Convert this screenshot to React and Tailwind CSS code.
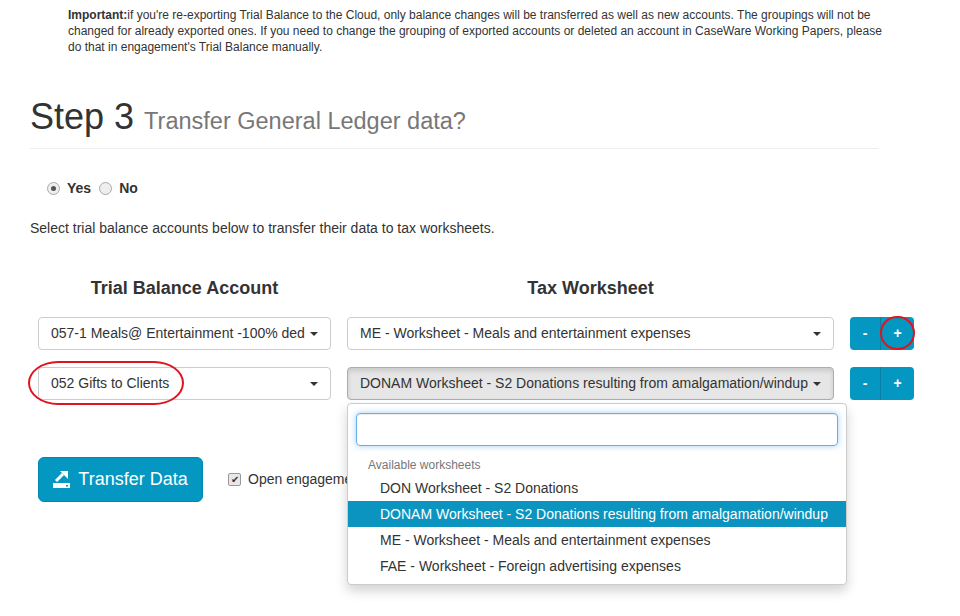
import { useState } from 'react';

const worksheets = [
  'DON Worksheet - S2 Donations',
  'DONAM Worksheet - S2 Donations resulting from amalgamation/windup',
  'ME - Worksheet - Meals and entertainment expenses',
  'FAE - Worksheet - Foreign advertising expenses',
];

function Caret() {
  return <span className="ml-auto h-0 w-0 shrink-0 border-x-[4px] border-t-[4px] border-x-transparent border-t-[#333]" />;
}

function SelectBox({ label, active }) {
  return (
    <div
      className={
        'flex h-[33px] w-full items-center overflow-hidden rounded-[4px] border pl-[12px] pr-[12px] text-[14px] text-[#333] ' +
        (active ? 'border-[#adadad] bg-[#e6e6e6] shadow-[inset_0_3px_5px_rgba(0,0,0,0.125)]' : 'border-[#ccc] bg-white')
      }
    >
      <span className="min-w-0 overflow-hidden whitespace-nowrap pr-[4px]">{label}</span>
      <Caret />
    </div>
  );
}

function PlusMinus() {
  return (
    <div className="flex h-[33px] overflow-hidden rounded-[4px] text-[14px] font-bold text-white">
      <div className="flex w-[31px] items-center justify-center border-r border-[#0880a6] bg-[#0497c1]">-</div>
      <div className="flex w-[33px] items-center justify-center bg-[#0497c1]">+</div>
    </div>
  );
}

function ExportIcon() {
  return (
    <svg width="18" height="17" viewBox="0 0 18 17" className="mr-[7px]">
      <rect x="0" y="12" width="17" height="5" fill="white" />
      <rect x="13" y="14" width="2" height="1.5" fill="#0497c1" />
      <path d="M3 10 L10 3" stroke="white" strokeWidth="3" />
      <polygon points="7,0 15,0 15,8" fill="white" />
    </svg>
  );
}

export default function App() {
  const [answer, setAnswer] = useState('yes');

  return (
    <div
      className="relative h-[616px] w-[960px] overflow-hidden bg-white text-[#333]"
      style={{ fontFamily: '"Liberation Sans", Arial, sans-serif' }}
    >
      {/* notice */}
      <p className="w-[888px] pl-[68px] pt-[7px] text-[12px] leading-[16px] text-[#333]">
        <b>Important:</b>if you're re-exporting Trial Balance to the Cloud, only balance changes will be transferred as well as new accounts. The groupings will not be changed for already exported ones. If you need to change the grouping of exported accounts or deleted an account in CaseWare Working Papers, please do that in engagement's Trial Balance manually.
      </p>

      <div className="px-[30px]">
        <h1 className="mt-[42px] text-[36px] leading-[40px] text-[#333]">
          Step 3 <small className="text-[23.5px] text-[#777]">Transfer General Ledger data?</small>
        </h1>
        <hr className="mt-[7px] w-[848px] border-t border-[#eee]" />

        {/* yes / no */}
        <div className="mt-[29px] flex items-center pl-[17px] text-[14px] font-bold">
          <label className="flex cursor-pointer items-center" onClick={() => setAnswer('yes')}>
            <span className="flex h-[13px] w-[13px] items-center justify-center rounded-full border border-[#aaa] bg-[#eee]">
              {answer === 'yes' && <span className="h-[5px] w-[5px] rounded-full bg-[#555]" />}
            </span>
            <span className="ml-[7px]">Yes</span>
          </label>
          <label className="ml-[8px] flex cursor-pointer items-center" onClick={() => setAnswer('no')}>
            <span className="flex h-[13px] w-[13px] items-center justify-center rounded-full border border-[#aaa] bg-[#eee]">
              {answer === 'no' && <span className="h-[5px] w-[5px] rounded-full bg-[#555]" />}
            </span>
            <span className="ml-[7px]">No</span>
          </label>
        </div>

        <p className="mt-[19px] text-[14px] leading-[20px]">
          Select trial balance accounts below to transfer their data to tax worksheets.
        </p>

        {/* mapping table */}
        <div className="mt-[37px] pl-[8px]">
          <div className="flex text-[18px] font-bold">
            <div className="w-[293px] text-center">Trial Balance Account</div>
            <div className="ml-[16px] w-[487px] text-center">Tax Worksheet</div>
          </div>

          <div className="mt-[15px] flex items-center">
            <div className="w-[293px]">
              <SelectBox label="057-1 Meals@ Entertainment -100% ded" />
            </div>
            <div className="ml-[16px] w-[487px]">
              <SelectBox label="ME - Worksheet - Meals and entertainment expenses" />
            </div>
            <div className="relative ml-[16px]">
              <PlusMinus />
              <span className="absolute left-[30px] top-[-1px] h-[34px] w-[35px] rounded-full border-2 border-[#e0141e]" />
            </div>
          </div>

          <div className="mt-[17px] flex items-center">
            <div className="relative w-[293px]">
              <SelectBox label="052 Gifts to Clients" />
              <span className="absolute left-[-10px] top-[-6px] h-[44px] w-[156px] rounded-[30px/22px] border-2 border-[#e0141e]" />
            </div>
            <div className="relative ml-[16px] w-[487px]">
              <SelectBox label="DONAM Worksheet - S2 Donations resulting from amalgamation/windup" active />

              {/* open dropdown */}
              <div className="absolute left-0 top-[36px] z-10 w-[500px] rounded-[4px] border border-[#ccc] bg-white pb-[5px] shadow-[0_6px_12px_rgba(0,0,0,0.175)]">
                <div className="px-[8px] pt-[9px]">
                  <div className="h-[33px] rounded-[4px] border border-[#66afe9] shadow-[inset_0_1px_1px_rgba(0,0,0,0.075),0_0_6px_rgba(102,175,233,0.6)]" />
                </div>
                <div className="mt-[9px] px-[20px] text-[12px] leading-[20px] text-[#777]">Available worksheets</div>
                <ul className="text-[14px]">
                  {worksheets.map((w, i) => (
                    <li
                      key={w}
                      className={
                        'h-[26px] pl-[32px] leading-[26px] ' +
                        (i === 1 ? 'bg-[#0b94bf] text-white' : 'text-[#333]')
                      }
                    >
                      {w}
                    </li>
                  ))}
                </ul>
              </div>
            </div>
            <div className="ml-[16px]">
              <PlusMinus />
            </div>
          </div>
        </div>

        {/* actions */}
        <div className="mt-[57px] flex items-center pl-[8px]">
          <button className="flex h-[45px] w-[165px] items-center justify-center rounded-[6px] border border-[#0387ae] bg-[#0497c1] text-[18px] text-white">
            <ExportIcon />
            Transfer Data
          </button>
          <label className="ml-[25px] flex items-center text-[14px]">
            <span className="flex h-[13px] w-[13px] items-center justify-center rounded-[2px] border border-[#999] bg-[#e8e8e8] text-[10px] leading-none text-[#333]">
              ✔
            </span>
            <span className="ml-[7px]">Open engagement after transfer</span>
          </label>
        </div>
      </div>
    </div>
  );
}
